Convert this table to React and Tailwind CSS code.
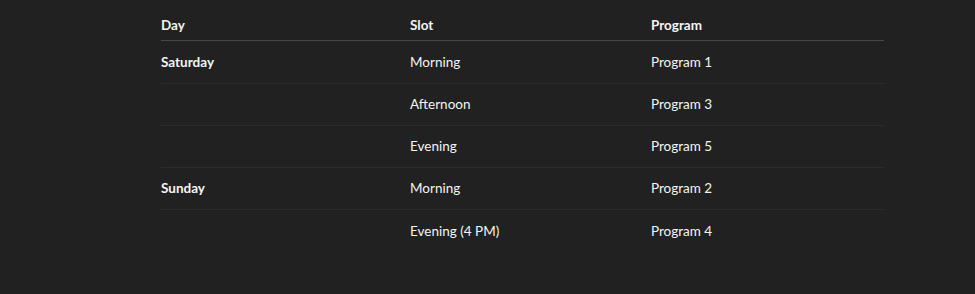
import React from 'react';

const rows = [
  { day: 'Saturday', slot: 'Morning', program: 'Program 1' },
  { day: '', slot: 'Afternoon', program: 'Program 3' },
  { day: '', slot: 'Evening', program: 'Program 5' },
  { day: 'Sunday', slot: 'Morning', program: 'Program 2' },
  { day: '', slot: 'Evening (4 PM)', program: 'Program 4' },
];

export default function App() {
  return (
    <div className="min-h-screen w-full bg-[#212121] pt-[11px] text-[13.5px] text-[#f4f4f4] font-['Segoe_UI','Lato','Open_Sans',sans-serif]">
      <div className="ml-[161px] w-[723px]">
        {/* header */}
        <div className="flex h-[30px] items-center border-b border-[#474747] font-bold">
          <div className="w-[249px]">Day</div>
          <div className="w-[241px]">Slot</div>
          <div className="flex-1">Program</div>
        </div>
        {rows.map((r, i) => (
          <div
            key={i}
            className={
              'flex items-center ' +
              (i === 0 ? 'h-[43px] ' : 'h-[42px] ') +
              (i < rows.length - 1 ? 'border-b border-[#2c2c2c]' : '')
            }
          >
            <div className="w-[249px] font-bold">{r.day}</div>
            <div className="w-[241px]">{r.slot}</div>
            <div className="flex-1">{r.program}</div>
          </div>
        ))}
      </div>
    </div>
  );
}
